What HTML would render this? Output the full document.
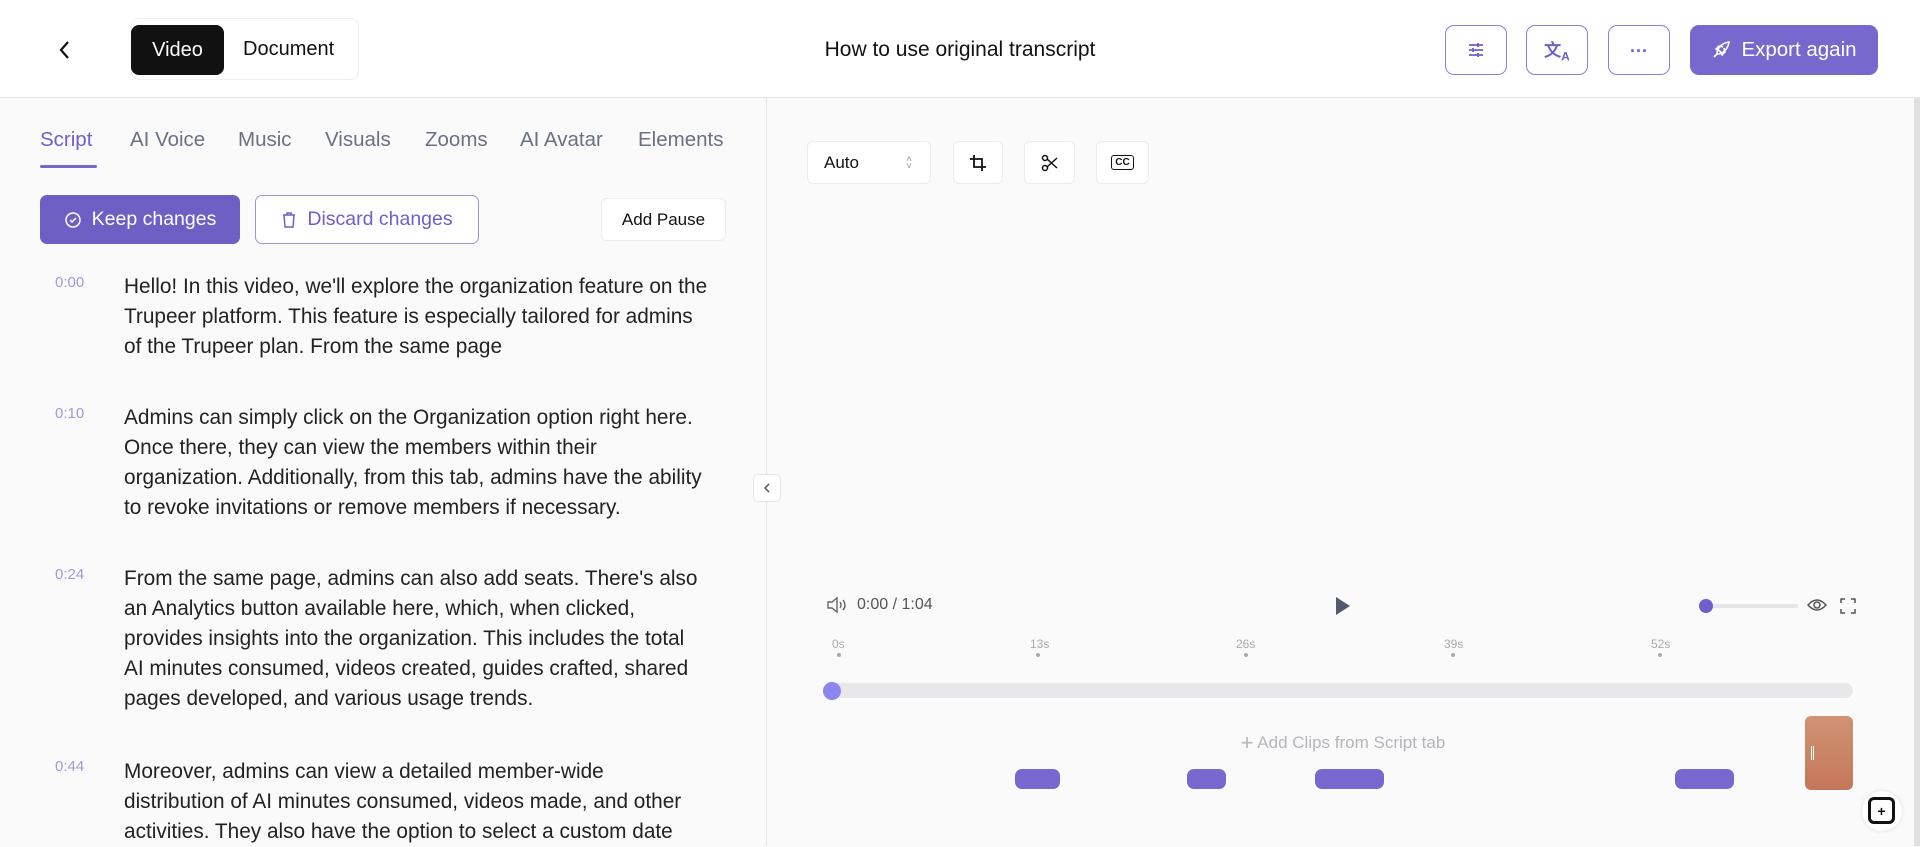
<!DOCTYPE html><html><head><meta charset="utf-8"><style>
*{box-sizing:border-box;margin:0;padding:0}
body{width:1920px;height:846px;overflow:hidden;font-family:"Liberation Sans",sans-serif;background:#fafafa;position:relative;color:#111}
.a{position:absolute}
.hdr{left:0;top:0;width:1920px;height:98px;background:#fff;border-bottom:1px solid #e6e6e9}
.ib{border:1.5px solid #8b80d6;border-radius:9px;width:62px;height:50px;top:25px;display:flex;align-items:center;justify-content:center;background:#fff}
.tab{top:128px;font-size:20.5px;color:#6b7184}
.ts{font-size:15px;color:#a19bd8;left:55px}
.tx{left:124px;font-size:20.8px;line-height:30px;color:#222;white-space:nowrap}
.tb{top:141px;height:43px;border:1px solid #ececef;border-radius:6px;background:#fff;display:flex;align-items:center;justify-content:center}
.rl{top:637px;font-size:12px;color:#aaa}
.dt{top:653px;width:4px;height:4px;border-radius:2px;background:#aaa}
.clip{top:769px;height:20px;border-radius:7px;background:#7767cf}
</style></head><body>
<div class="a hdr"></div>
<svg class="a" style="left:56px;top:39px" width="18" height="22" viewBox="0 0 18 22"><path d="M12 3 L5 11 L12 19" fill="none" stroke="#111" stroke-width="2.2"/></svg>
<div class="a" style="left:131px;top:18px;width:228px;height:62px;border:1px solid #f0f0f2;border-radius:8px;background:#fff"></div>
<div class="a" style="left:131px;top:25px;width:93px;height:50px;background:#111;border-radius:8px;color:#fff;font-size:20px;display:flex;align-items:center;justify-content:center">Video</div>
<div class="a" style="left:243px;top:38px;font-size:20px">Document</div>
<div class="a" style="left:0;width:1920px;top:38px;text-align:center;font-size:21px">How to use original transcript</div>
<div class="a ib" style="left:1445px"><svg width="20" height="20" viewBox="0 0 20 20" stroke="#6e5fca" stroke-width="1.8" fill="none"><path d="M3 5h14M3 10h14M3 15h14M12 3v4M7 8v4M12 13v4"/></svg></div>
<div class="a ib" style="left:1526px"><span style="color:#6e5fca;font-size:17px;font-weight:bold">文<sub style="font-size:12px">A</sub></span></div>
<div class="a ib" style="left:1608px"><span style="color:#6e5fca;font-size:18px;font-weight:bold;letter-spacing:1px;margin-top:-8px">...</span></div>
<div class="a" style="left:1690px;top:25px;width:188px;height:50px;border-radius:9px;background:#7668cc;color:#fff;font-size:20.5px;display:flex;align-items:center;justify-content:center;gap:10px"><svg width="20" height="20" viewBox="0 0 20 20" fill="none" stroke="#fff" stroke-width="1.6"><path d="M6 14c0-6 5-11 12-12-1 7-6 12-12 12zM6 14l-3 3M9 11L5 9l3-3 4 1M9 11l2 4 3-3-1-4"/></svg>Export again</div>
<div class="a" style="left:766px;top:98px;width:1px;height:748px;background:#e6e6e9"></div>
<div class="a" style="left:1914px;top:98px;width:6px;height:748px;background:#e0e0e0"></div>
<div class="a tab" style="left:40px;color:#6e5fca">Script</div>
<div class="a" style="left:40px;top:165px;width:57px;height:3px;background:#7668cc;border-radius:2px"></div>
<div class="a tab" style="left:130px">AI Voice</div>
<div class="a tab" style="left:238px">Music</div>
<div class="a tab" style="left:325px">Visuals</div>
<div class="a tab" style="left:425px">Zooms</div>
<div class="a tab" style="left:520px">AI Avatar</div>
<div class="a tab" style="left:638px">Elements</div>
<div class="a" style="left:40px;top:195px;width:200px;height:49px;border-radius:7px;background:#6e5fc5;color:#fff;font-size:19.5px;display:flex;align-items:center;justify-content:center;gap:10px"><svg width="18" height="18" viewBox="0 0 18 18" fill="none" stroke="#fff" stroke-width="1.5"><circle cx="9" cy="9" r="7"/><path d="M6 9l2 2 4-4"/></svg>Keep changes</div>
<div class="a" style="left:255px;top:195px;width:224px;height:49px;border-radius:7px;border:1.5px solid #9c92dd;background:#fff;color:#6e5fca;font-size:19.5px;display:flex;align-items:center;justify-content:center;gap:10px"><svg width="16" height="18" viewBox="0 0 16 18" fill="none" stroke="#6e5fca" stroke-width="1.5"><path d="M2 4h12M6 4V2h4v2M3 4l1 12h8l1-12"/></svg>Discard changes</div>
<div class="a" style="left:601px;top:198px;width:125px;height:43px;border-radius:6px;border:1px solid #ececef;background:#fff;font-size:17px;display:flex;align-items:center;justify-content:center">Add Pause</div>
<div class="a ts" style="top:274px">0:00</div>
<div class="a tx" style="top:272px">Hello! In this video, we'll explore the organization feature on the<br>Trupeer platform. This feature is especially tailored for admins<br>of the Trupeer plan. From the same page</div>
<div class="a ts" style="top:405px">0:10</div>
<div class="a tx" style="top:403px">Admins can simply click on the Organization option right here.<br>Once there, they can view the members within their<br>organization. Additionally, from this tab, admins have the ability<br>to revoke invitations or remove members if necessary.</div>
<div class="a ts" style="top:566px">0:24</div>
<div class="a tx" style="top:564px">From the same page, admins can also add seats. There's also<br>an Analytics button available here, which, when clicked,<br>provides insights into the organization. This includes the total<br>AI minutes consumed, videos created, guides crafted, shared<br>pages developed, and various usage trends.</div>
<div class="a ts" style="top:758px">0:44</div>
<div class="a tx" style="top:757px">Moreover, admins can view a detailed member-wide<br>distribution of AI minutes consumed, videos made, and other<br>activities. They also have the option to select a custom date</div>
<div class="a" style="left:753px;top:474px;width:28px;height:28px;border:1px solid #e6e6e9;border-radius:5px;background:#fff;display:flex;align-items:center;justify-content:center"><svg width="10" height="12" viewBox="0 0 10 12"><path d="M7 2L3 6l4 4" fill="none" stroke="#555" stroke-width="1.5"/></svg></div>
<div class="a tb" style="left:807px;width:124px;justify-content:flex-start;padding-left:16px;font-size:17px">Auto<span style="position:absolute;right:18px;font-size:10px;color:#999;line-height:7px">˄<br>˅</span></div>
<div class="a tb" style="left:953px;width:50px"><svg width="18" height="18" viewBox="0 0 18 18" fill="none" stroke="#111" stroke-width="1.8"><path d="M5 1v12h12M1 5h12v12"/></svg></div>
<div class="a tb" style="left:1024px;width:51px"><svg width="18" height="18" viewBox="0 0 18 18" fill="none" stroke="#111" stroke-width="1.5"><circle cx="4" cy="4" r="2.5"/><circle cx="4" cy="14" r="2.5"/><path d="M6 5l10 9M6 13L16 4"/></svg></div>
<div class="a tb" style="left:1096px;width:53px"><div style="border:1.5px solid #111;border-radius:3px;font-size:10px;padding:1px 3px;font-weight:bold">CC</div></div>
<svg class="a" style="left:826px;top:596px" width="22" height="18" viewBox="0 0 22 18" fill="none" stroke="#666" stroke-width="1.4"><path d="M2 6h4l5-4v14l-5-4H2zM14 6q2 3 0 6M17 4q4 5 0 10"/></svg>
<div class="a" style="left:857px;top:596px;font-size:16px;color:#555">0:00 / 1:04</div>
<svg class="a" style="left:1334px;top:596px" width="18" height="20" viewBox="0 0 18 20"><path d="M2 1L16 10 2 19z" fill="#525a6e"/></svg>
<div class="a" style="left:1705px;top:604px;width:93px;height:4px;background:#e5e5e8;border-radius:2px"></div>
<div class="a" style="left:1699px;top:599px;width:14px;height:14px;border-radius:7px;background:#6e5fca"></div>
<svg class="a" style="left:1807px;top:596px" width="20" height="18" viewBox="0 0 20 18" fill="none" stroke="#555" stroke-width="1.5"><path d="M1 9q9-10 18 0q-9 10-18 0z"/><circle cx="10" cy="9" r="3"/></svg>
<svg class="a" style="left:1840px;top:598px" width="16" height="16" viewBox="0 0 16 16" fill="none" stroke="#555" stroke-width="1.5"><path d="M1 5V1h4M11 1h4v4M15 11v4h-4M5 15H1v-4"/></svg>
<div class="a rl" style="left:832px">0s</div><div class="a dt" style="left:837px"></div>
<div class="a rl" style="left:1030px">13s</div><div class="a dt" style="left:1036px"></div>
<div class="a rl" style="left:1236px">26s</div><div class="a dt" style="left:1244px"></div>
<div class="a rl" style="left:1444px">39s</div><div class="a dt" style="left:1451px"></div>
<div class="a rl" style="left:1651px">52s</div><div class="a dt" style="left:1658px"></div>
<div class="a" style="left:823px;top:683px;width:1030px;height:15px;background:#e8e8ea;border-radius:8px"></div>
<div class="a" style="left:823px;top:682px;width:18px;height:18px;border-radius:9px;background:#8c86f0"></div>
<div class="a" style="left:0;width:2686px;top:730px;text-align:center;font-size:17px;color:#b5b5bb"><span style="font-size:22px;vertical-align:-2px">+</span> Add Clips from Script tab</div>
<div class="a clip" style="left:1015px;width:45px"></div>
<div class="a clip" style="left:1187px;width:39px"></div>
<div class="a clip" style="left:1315px;width:69px"></div>
<div class="a clip" style="left:1675px;width:59px"></div>
<div class="a" style="left:1805px;top:716px;width:48px;height:74px;border-radius:6px;background:linear-gradient(#d09373,#c4765a)"><div style="position:absolute;left:6px;top:30px;width:3px;height:14px;border-left:1px solid #fff;border-right:1px solid #fff"></div></div>
<div class="a" style="left:1862px;top:791px;width:40px;height:40px;border-radius:20px;background:#fff;box-shadow:0 0 4px #ddd"></div>
<div class="a" style="left:1868px;top:797px;width:27px;height:27px;border:3px solid #111;border-radius:6px;display:flex;align-items:center;justify-content:center;font-size:14px;font-weight:bold">+</div>
</body></html>
